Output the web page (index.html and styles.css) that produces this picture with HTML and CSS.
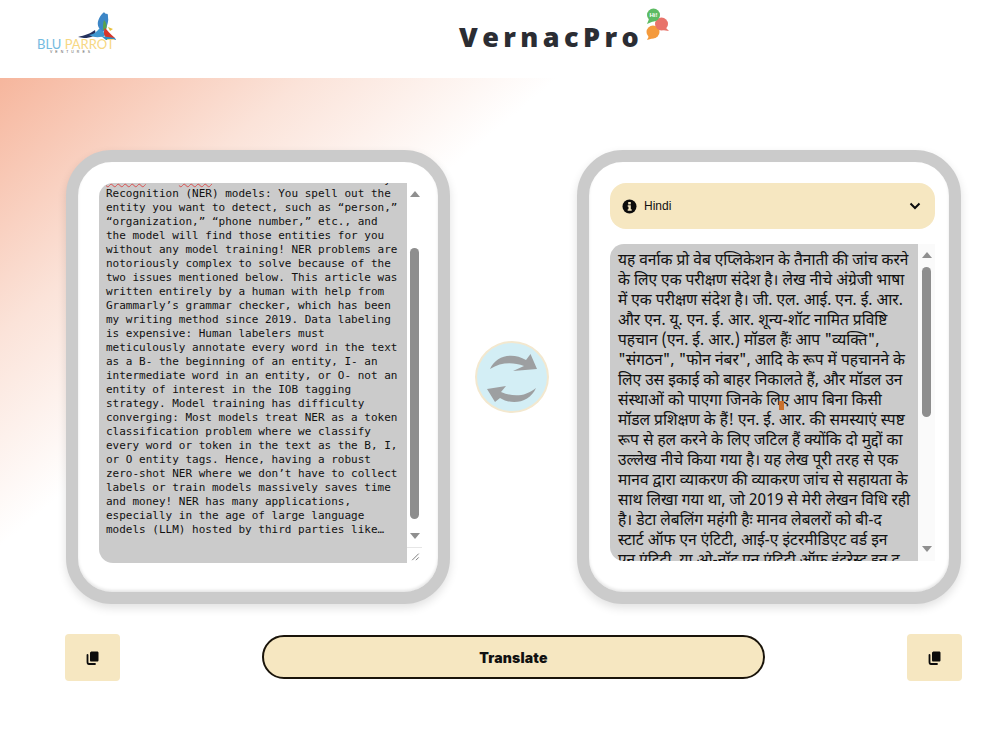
FILE: index.html
```html
<!DOCTYPE html>
<html lang="en">
<head>
<meta charset="utf-8">
<title>VernacPro</title>
<link rel="stylesheet" href="styles.css">
</head>
<body>
<header class="header">
  <svg class="logo" width="90" height="48" viewBox="0 0 90 48" aria-label="Blu Parrot Ventures">
    <path d="M42 26 C49 24 54 23 59 19 C61 25 55 27 48 27 Z" fill="#23305c"/>
    <path d="M53 24 C59 23 61 20 64 17 L70 24 C64 27 59 27 53 24 Z" fill="#3f97cf"/>
    <path d="M63 17 C60 12 63 6 67 2 C68 1 69 2 70 3 C72 2 72 4 72 6 C73 10 71 14 70 18 L67 21 Z" fill="#3d86c6"/>
    <path d="M68 9 C71 12 71 16 70 19 L67 19 C67 15 67 12 68 9 Z" fill="#5aa24c"/>
    <path d="M69 17 C71 19 74 23 79 27 L71 28 C68 25 67 21 69 17 Z" fill="#d9372a"/>
    <path d="M72 16 L77 18 L74 20 Z" fill="#e8c13d"/>
    <path d="M65 25 L79 27 L80 29 L70 29 Z" fill="#2f8fc4"/>
    <text x="1" y="38" class="logo-text"><tspan class="logo-blu">BLU</tspan> <tspan class="logo-parrot">PARROT</tspan></text>
    <text x="14" y="42" class="logo-sub">VENTURES</text>
  </svg>
  <div class="brand">
    <h1 class="brand-name">VernacPro</h1>
    <svg class="bubbles" width="26" height="34" viewBox="0 0 26 34" aria-hidden="true">
      <circle cx="7" cy="25" r="6.500" fill="#f49a3c"/>
      <path d="M3 29 L1 33 L8 31 Z" fill="#f49a3c"/>
      <circle cx="15.500" cy="17" r="6.500" fill="#e8736a"/>
      <path d="M20 21 L23 24 L16 23 Z" fill="#e8736a"/>
      <circle cx="7.500" cy="8" r="6.500" fill="#5dbb63"/>
      <path d="M3 12 L1 17 L8 14 Z" fill="#5dbb63"/>
      <text x="3.500" y="10" class="bubble-text">Hi!</text>
    </svg>
  </div>
</header>

<main class="main">
  <section class="panels">
    <article class="card">
      <div class="scroller scroller-left">
        <div class="text-clip">
          <p class="source-text"><span class="spell">GLiNER</span> and <span class="spell">NuNER</span> are Zero-shot Named Entity Recognition (NER) models: You spell out the entity you want to detect, such as “person,” “organization,” “phone number,” etc., and the model will find those entities for you without any model training! NER problems are notoriously complex to solve because of the two issues mentioned below. This article was written entirely by a human with help from Grammarly’s grammar checker, which has been my writing method since 2019. Data labeling is expensive: Human labelers must meticulously annotate every word in the text as a B- the beginning of an entity, I- an intermediate word in an entity, or O- not an entity of interest in the IOB tagging strategy. Model training has difficulty converging: Most models treat NER as a token classification problem where we classify every word or token in the text as the B, I, or O entity tags. Hence, having a robust zero-shot NER where we don’t have to collect labels or train models massively saves time and money! NER has many applications, especially in the age of large language models (LLM) hosted by third parties like…</p>
        </div>
        <div class="track track-left">
          <span class="arrow arrow-up"></span>
          <span class="thumb thumb-left"></span>
          <span class="arrow arrow-down"></span>
          <svg class="resizer" width="15" height="16" viewBox="0 0 15 16" aria-hidden="true">
            <path d="M5 13 L12 6 M9 13 L12 10" stroke="#777" stroke-width="1" fill="none"/>
          </svg>
        </div>
      </div>
    </article>

    <button class="swap" type="button" aria-label="Swap languages">
      <svg width="74" height="72" viewBox="0 0 74 72" aria-hidden="true">
        <path d="M15 28 C21 14 38 11 51 19 L55.500 13 L62 28 L38 30 L49 25 C38 21 26 21 15 28 Z" fill="#9d9fa1"/>
        <path d="M61 47 C55 61 38 65 25 57 L20 61 L12 48 L31 45 L26 51 C38 56 50 56 61 47 Z" fill="#9d9fa1"/>
      </svg>
    </button>

    <article class="card card-right">
      <div class="select">
        <svg class="info" width="15" height="15" viewBox="0 0 15 15" aria-hidden="true">
          <circle cx="7.500" cy="7.500" r="7" fill="#0c0c0c"/>
          <rect x="6.200" y="3" width="2.600" height="2.400" fill="#f6e7c1"/>
          <path d="M5.700 6.300 H8.800 V10.300 H9.700 V11.700 H5.700 V10.300 H6.500 V7.700 H5.700 Z" fill="#f6e7c1"/>
        </svg>
        <span class="select-label">Hindi</span>
        <svg class="chevron" width="12" height="8" viewBox="0 0 12 8" aria-hidden="true">
          <path d="M1.500 1.500 L6 6 L10.500 1.500" stroke="#0c0c0c" stroke-width="2" fill="none"/>
        </svg>
      </div>
      <div class="scroller scroller-right">
        <div class="text-clip">
          <p class="target-text" lang="hi">
            <span class="line">यह वर्नाक प्रो वेब एप्लिकेशन के तैनाती की जांच करने</span>
            <span class="line">के लिए एक परीक्षण संदेश है। लेख नीचे अंग्रेजी भाषा</span>
            <span class="line">में एक परीक्षण संदेश है। जी. एल. आई. एन. ई. आर.</span>
            <span class="line">और एन. यू. एन. ई. आर. शून्य-शॉट नामित प्रविष्टि</span>
            <span class="line">पहचान (एन. ई. आर.) मॉडल हैंः आप "व्यक्ति",</span>
            <span class="line">"संगठन", "फोन नंबर", आदि के रूप में पहचानने के</span>
            <span class="line">लिए उस इकाई को बाहर निकालते हैं, और मॉडल उन</span>
            <span class="line">संस्थाओं को पाएगा जिनके लिए आप बिना किसी</span>
            <span class="line">मॉडल प्रशिक्षण के हैं! एन. ई. आर. की समस्याएं स्पष्ट</span>
            <span class="line">रूप से हल करने के लिए जटिल हैं क्योंकि दो मुद्दों का</span>
            <span class="line">उल्लेख नीचे किया गया है। यह लेख पूरी तरह से एक</span>
            <span class="line">मानव द्वारा व्याकरण की व्याकरण जांच से सहायता के</span>
            <span class="line">साथ लिखा गया था, जो 2019 से मेरी लेखन विधि रही</span>
            <span class="line">है। डेटा लेबलिंग महंगी हैः मानव लेबलरों को बी-द</span>
            <span class="line">स्टार्ट ऑफ एन एंटिटी, आई-ए इंटरमीडिएट वर्ड इन</span>
            <span class="line">एन एंटिटी, या ओ-नॉट एन एंटिटी ऑफ इंटरेस्ट इन द</span>
          </p>
          <span class="cursor-mark"></span>
        </div>
        <div class="track track-right">
          <span class="arrow arrow-up"></span>
          <span class="thumb thumb-right"></span>
          <span class="arrow arrow-down"></span>
        </div>
      </div>
    </article>
  </section>

  <section class="actions">
    <button class="copy" type="button" aria-label="Copy source">
      <svg width="13" height="14" viewBox="0 0 13 14" aria-hidden="true"><use href="#copy-icon"/></svg>
    </button>
    <button class="translate" type="button">Translate</button>
    <button class="copy" type="button" aria-label="Copy translation">
      <svg width="13" height="14" viewBox="0 0 13 14" aria-hidden="true"><use href="#copy-icon"/></svg>
    </button>
  </section>
</main>

<svg class="defs" width="0" height="0" aria-hidden="true">
  <symbol id="copy-icon" viewBox="0 0 13 14">
    <path d="M4 2 C4 1 5 .5 6 .5 H11 C12 .5 12.500 1 12.500 2 V9 C12.500 10 12 10.500 11 10.500 H5 C4.500 10.500 4 10 4 9 Z" fill="#0c0c0c"/>
    <path d="M1.500 4 V11 C1.500 12 2 13 3 13 H9" stroke="#0c0c0c" stroke-width="1.800" fill="none" stroke-linecap="round"/>
  </symbol>
</svg>
</body>
</html>
```

FILE: styles.css
```css
* { box-sizing: border-box; }

html, body { margin: 0; padding: 0; }

body {
  width: 1003px;
  height: 748px;
  overflow: hidden;
  background: #fff;
  font-family: "Liberation Sans", Arial, sans-serif;
}

.header {
  display: flex;
  height: 78px;
  padding-left: 36px;
  background: #fff;
}

.logo { margin-top: 11px; flex: none; }
.logo-text { font: 400 13px "Lato", sans-serif; letter-spacing: 0; }
.logo-blu { fill: #74bbdf; }
.logo-parrot { fill: #f7d882; }
.logo-sub { font: 3.5px "Liberation Sans", sans-serif; letter-spacing: 3px; fill: #555; }

.brand { display: flex; margin-left: 333px; }
.brand-name {
  margin: 19px 0 0;
  font: 800 27px/36px "Open Sans", sans-serif;
  letter-spacing: 4.4px;
  color: #2b2d33;
}
.bubbles { margin: 7px 0 0 3px; }
.bubble-text { font: 700 6px "Liberation Sans", sans-serif; fill: #fff; }

.main {
  height: 670px;
  padding-top: 72px;
  background: linear-gradient(140deg, #f6b69d 0%, #fbe3d9 17%, #fff 31%);
}

.panels {
  display: flex;
  align-items: center;
  justify-content: space-between;
  padding: 0 42px 0 66px;
}

.card {
  width: 384px;
  height: 454px;
  padding: 21px 16px 30px 21px;
  background: #fff;
  border: 12px solid #cbcbcb;
  border-radius: 46px;
  box-shadow: 0 4px 10px rgba(0, 0, 0, .12), inset 0 -2px 3px rgba(0, 0, 0, .1);
}

.card-right { padding: 21px 14px 32px 21px; }

.scroller { display: flex; }
.scroller-left { height: 380px; }
.scroller-right { height: 317px; margin-top: 15px; }

.text-clip {
  flex: 1;
  min-width: 0;
  position: relative;
  overflow: hidden;
  background: #cbcbcb;
  border-radius: 14px 0 0 14px;
}

.source-text {
  margin: -10px 0 0;
  padding: 0 7px;
  font: 11px/14px "DejaVu Sans Mono", "Liberation Mono", monospace;
  color: #111;
}

.spell { text-decoration: underline wavy #d95050 1px; text-underline-offset: 0; }

.target-text {
  margin: 0;
  padding: 7px 8px 0;
  font: 15.5px/20px "Noto Sans Devanagari", "Noto Serif Devanagari", "Lohit Devanagari", "FreeSerif", "Liberation Sans", sans-serif;
  color: #111;
}

.line { display: block; white-space: nowrap; }

.cursor-mark {
  position: absolute;
  left: 169px;
  top: 157px;
  width: 5px;
  height: 9px;
  background: #c9702c;
}

.track {
  flex: none;
  display: flex;
  flex-direction: column;
  align-items: center;
}
.track-left { width: 15px; padding-top: 8px; background: #fff; }
.track-right { width: 17px; padding-top: 8px; background: #fafafa; }

.arrow { width: 0; height: 0; border-left: 5px solid transparent; border-right: 5px solid transparent; }
.arrow-up { border-bottom: 6px solid #8f8f8f; }
.arrow-down { border-top: 6px solid #8f8f8f; }

.thumb { width: 9px; background: #8e8e8e; border-radius: 5px; }
.thumb-left { height: 271px; margin-top: 51px; margin-bottom: 14px; }
.thumb-right { height: 150px; margin-top: 9px; margin-bottom: 129px; }

.resizer { margin-top: 8px; border-top: 1px solid #e6e6e6; background: #fff; }

.swap {
  width: 74px;
  height: 72px;
  margin-right: 3px;
  padding: 0;
  display: flex;
  background: #d3eef5;
  border: 2px solid #f3e8cf;
  border-radius: 50%;
}
.swap svg { margin: -2px; }

.select {
  display: flex;
  align-items: center;
  height: 46px;
  padding: 0 14px 0 12px;
  background: #f6e7c1;
  border-radius: 16px;
}
.select-label { margin-left: 7px; font-size: 12px; color: #111; }
.chevron { margin-left: auto; }

.actions {
  display: flex;
  align-items: center;
  justify-content: space-between;
  margin-top: 30px;
  padding: 0 41px 0 65px;
}

.copy {
  width: 55px;
  height: 47px;
  padding: 0 1px 0 0;
  display: flex;
  align-items: center;
  justify-content: center;
  background: #f6e7c1;
  border: 0;
  border-radius: 4px;
}

.translate {
  width: 503px;
  height: 44px;
  margin-bottom: 2px;
  padding-top: 3px;
  background: #f6e7c1;
  border: 2px solid #1a140a;
  border-radius: 22px;
  font: 900 14px "Inter", sans-serif;
  letter-spacing: .2px;
  color: #111;
}

.defs { position: absolute; }
```
